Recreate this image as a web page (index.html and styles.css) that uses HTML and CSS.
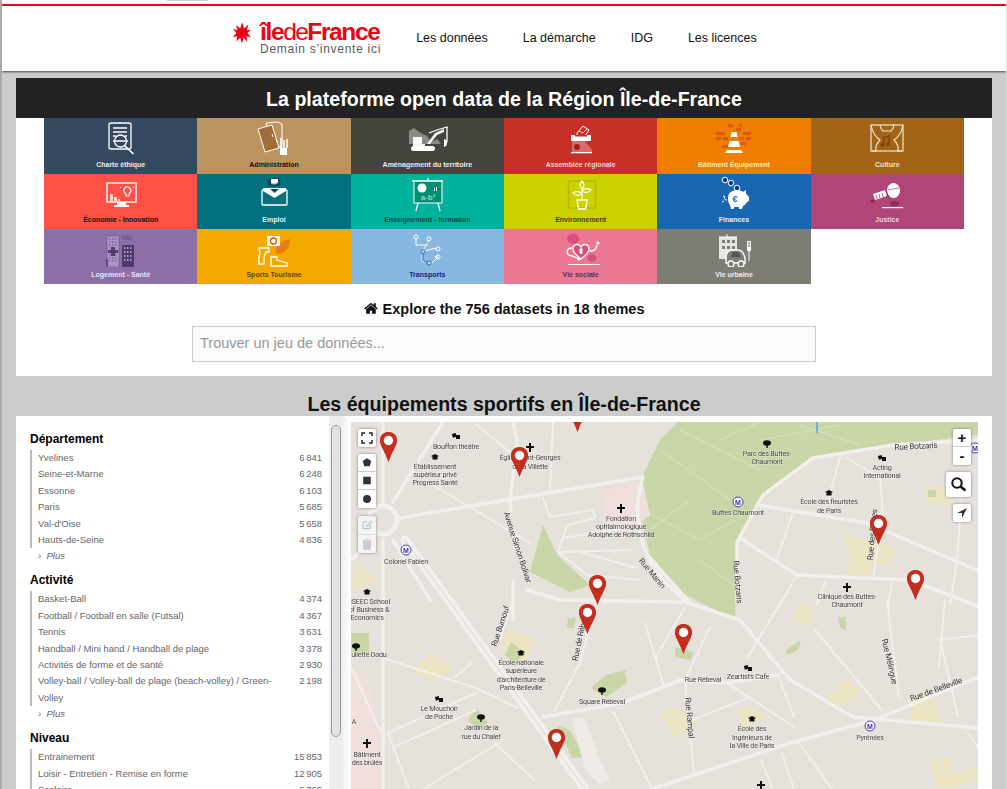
FILE: index.html
```html
<!DOCTYPE html>
<html lang="fr">
<head>
<meta charset="utf-8">
<title>Île-de-France open data</title>
<link rel="stylesheet" href="styles.css">
</head>
<body>
<div class="page">
<header class="header">
  <div class="topstrip"><span class="toptab"></span></div>
  <div class="redline"></div>
  <div class="navrow">
    <a class="logo">
      <svg class="star" viewBox="0 0 20 24"><polygon fill="#f00012" points="10,0 12.300,7 17,2.500 15.300,9 20,8.500 16,12 20,16.500 15,15.500 16,22 11.800,17 10,24 8,17 3.500,21.500 4.800,15.500 0,16.500 3.800,12 0,7.500 5,9 3.500,3 8,7"/></svg>
      <span class="logotext">
        <span class="logomain">île<span class="logode">de</span>France</span>
        <span class="logosub">Demain s’invente ici</span>
      </span>
    </a>
    <nav class="nav"><a>Les données</a><a>La démarche</a><a>IDG</a><a>Les licences</a></nav>
  </div>
</header>
<main class="main">
<section class="hero">
  <h1 class="band">La plateforme open data de la Région Île-de-France</h1>
  <div class="tiles">
    <div class="tile t1"><svg viewBox="0 0 56 36"><g fill="none" stroke="#fff" stroke-width="1.300"><rect x="16" y="3" width="22" height="26" rx="2"/><path d="M20 8h14M20 12h14M20 16h3M32 16h2"/><circle cx="27.500" cy="21" r="6" fill="#34495f"/><path d="M20 21h15M31.500 25.500l9 8.500" stroke-width="1.700"/></g></svg><span>Charte éthique</span></div>
    <div class="tile t2"><svg viewBox="0 0 56 36"><path d="M20 3l11-1 5 2v23H24z" fill="none" stroke="#fff" stroke-width="1"/><path d="M12 9l14-4 7 23-14 4z" fill="#a06d38" stroke="#fff" stroke-width="1"/><path d="M26 14l1 3M30 19l1 3" stroke="#fff"/><path d="M35 18v10M38 20v8M41 19v9" stroke="#fff" stroke-width="1.500"/><rect x="34" y="28" width="7" height="7" fill="#fff"/></svg><span class="dark0">Administration</span></div>
    <div class="tile t3"><svg viewBox="0 0 56 36"><path d="M10 24v-13l5-3 5 4 8 4 4 6 6-3 4 5z" fill="#8b8a84"/><path d="M14 17h9v7h5l8-11 9-4v3l-7 3-7 9h-5v2H14z" fill="#fff" opacity=".95"/><path d="M30 13l8-3 10-3v15" fill="none" stroke="#fff" stroke-width="1.300"/><path d="M45 19c4 1 4 7 0 8z" fill="#fff"/><rect x="12" y="26" width="24" height="5" rx="2.500" fill="#fff"/></svg><span>Aménagement du territoire</span></div>
    <div class="tile t4"><svg viewBox="0 0 56 36"><path d="M24 13l6-7 6 4-4 6h-8z" fill="#c82f26" stroke="#fff"/><path d="M26 11l4 2 4-4" fill="none" stroke="#fff" stroke-width=".8"/><rect x="18" y="15" width="20" height="6" fill="#fff"/><rect x="22" y="15" width="12" height="1.500" fill="#c82f26"/><path d="M19 21h13l7 9v2H19z" fill="#fff" opacity=".3"/><rect x="18" y="32" width="21" height="1.300" fill="#fff"/><circle cx="24" cy="27" r="3" fill="#a31c15"/></svg><span class="lt4">Assemblée régionale</span></div>
    <div class="tile t5"><svg viewBox="0 0 56 36"><g fill="#dc5a0b"><rect x="10" y="12" width="9" height="3"/><rect x="10" y="17" width="5" height="3"/><rect x="17" y="17" width="5" height="3"/><rect x="22" y="4" width="5" height="3"/><rect x="30" y="8" width="5" height="3"/><rect x="37" y="12" width="8" height="3"/><rect x="33" y="17" width="5" height="3"/><rect x="40" y="17" width="5" height="3"/><rect x="35" y="22" width="5" height="3"/><rect x="16" y="25" width="6" height="3"/><rect x="33" y="4" width="3" height="3"/></g><path d="M25.500 12h5l1 5h-7zM23.500 21h9l1.500 6h-12zM19 33l2-3h14l2 3z" fill="#fff"/></svg><span class="lt5">Bâtiment Équipement</span></div>
    <div class="tile t6"><svg viewBox="0 0 56 36"><g fill="none" stroke="#f4e6cf" stroke-width="1.200"><rect x="12" y="5" width="32" height="26" /><path d="M12 5c2 10 6 13 9 15-3 3-5 6-4 11h-4M44 5c-2 10-6 13-9 15 3 3 5 6 4 11h4M21 5c0 3 2 5 3 6h8c1-1 3-3 3-6"/></g><path d="M24 17l7-2v9a2 2 0 1 1-1.500-2v-5l-4 1v7a2 2 0 1 1-1.500-2z" fill="#7d470b"/></svg><span class="lt6">Culture</span></div>

    <div class="tile t7"><svg viewBox="0 0 56 36"><rect x="14" y="7" width="29" height="19" fill="#ff5145" stroke="#fff" stroke-width="1.400"/><path d="M24 26h9v3h3v2H21v-2h3z" fill="#fff"/><path d="M17 18h3v7h-3zM21 21h3v4h-3zM25 23h2v2h-2z" fill="#fff" opacity=".75"/><path d="M33 18c-5-4 0-8 2-7s5 3 1 7v2h-3z" fill="none" stroke="#fff" stroke-width="1.200"/><path d="M27 11l1 1M34 6v1M41 11l-1 1" stroke="#fff"/></svg><span class="dark0">Économie - Innovation</span></div>
    <div class="tile t8"><svg viewBox="0 0 56 36"><path d="M22 10V5c0-2 1-3 3-3h7c1 0 2 1 2 3v5z" fill="#0b4a5a"/><path d="M25 3h7v3l-1 2-1-1-1 2-1-2-1 2-1-2-1 1z" fill="#fff"/><path d="M17 14h23a1 1 0 0 1 1 1v13a1 1 0 0 1-1 1H17a1 1 0 0 1-1-1V15a1 1 0 0 1 1-1z" fill="none" stroke="#fff" stroke-width="1.300"/><path d="M17 12h23v3l-11.500 7L17 15z" fill="#fff"/><path d="M24 13h9l-4.500 4z" fill="#0b4a5a"/></svg><span class="lt8">Emploi</span></div>
    <div class="tile t9"><svg viewBox="0 0 56 36"><rect x="15" y="5" width="28" height="22" fill="#008f74"/><path d="M13 5h31M29 2v3M19 27l-2 8M39 27l2 8" stroke="#fff" stroke-width="1.300"/><path d="M15 5v22h28V5" fill="none" stroke="#fff" stroke-width="1"/><circle cx="23" cy="12" r="4.500" fill="#fff"/><path d="M35 12h1v3h-1zM37 11h1v4h-1z" fill="#fff"/><text x="29" y="23.500" class="boardtxt">a-b²</text></svg><span class="lt9">Enseignement - formation</span></div>
    <div class="tile t10"><svg viewBox="0 0 56 36"><rect x="15.500" y="5" width="27" height="27" fill="none" stroke="#b4b900" stroke-width="1.500"/><g fill="none" stroke="#fff" stroke-width="1.100"><path d="M29 24V12"/><path d="M29 5c-3 3-2 6 0 8 2-2 3-5 0-8zM29 18c-2-3-6-3-9-1 2 3 6 3 9 1zM29 15c2-3 6-3 9-1-2 3-6 3-9 1z"/></g><path d="M24 24h10l-1.500 9H25.500z" fill="none" stroke="#fff" stroke-width="1.300"/></svg><span class="lt10">Environnement</span></div>
    <div class="tile t11"><svg viewBox="0 0 56 36"><g fill="#0c3c86" stroke="#fff"><circle cx="19" cy="4" r="2.800"/><circle cx="25" cy="7" r="2.800"/><circle cx="31" cy="12" r="2.800"/></g><path d="M22 22c0-6 5-8 10-8 2 0 4 1 5 2l3-2v4c2 1 3 3 3 3v4l-2 1c-1 2-2 3-4 4l-1 3h-3v-2h-5v2h-3l-1-4c-1-1-2-3-2-7z" fill="#fff"/><text x="29" y="26" class="eurotxt">€</text><path d="M21 24c-3 0-3-2-2-4M18 25l-2 1M19 21l-2-1" stroke="#fff" fill="none"/></svg><span class="lt11">Finances</span></div>
    <div class="tile t12"><svg viewBox="0 0 56 36"><path d="M27 15l5-1 1 6-5 1z" fill="#7f2552"/><path d="M14 18l12-4 2 6-12 4z" fill="#fff"/><path d="M17 19l1 4M20 18l1 4M23 17l1 4" stroke="#b04577" stroke-width=".8"/><ellipse cx="34.500" cy="14.500" rx="6.500" ry="7.500" fill="#fff"/><path d="M29 14l11-2" stroke="#b04577" stroke-width=".7"/><ellipse cx="13.500" cy="25" rx="2" ry="1.500" fill="#7f2552"/><rect x="23" y="31" width="21" height="1.200" fill="#fff"/><ellipse cx="35.500" cy="27.500" rx="4.700" ry="2.500" fill="#8f2b5e"/></svg><span class="lt12">Justice</span></div>

    <div class="tile t13"><svg viewBox="0 0 56 36"><rect x="14" y="5" width="12" height="31" fill="#ab95c3" stroke="#5e4780" stroke-width=".5"/><path d="M16 8h8M16 11h8M16 14h8M16 24h8M16 27h8M16 30h8" stroke="#5e4780" stroke-dasharray="1.500 1.500"/><path d="M18 16h4v3h3v3h-3v3h-4v-3h-3v-3h3z" fill="#503c70"/><rect x="29" y="14" width="12" height="22" fill="#4f3870"/><path d="M31 17h8M31 21h8M31 25h8M31 29h8" stroke="#fff" stroke-dasharray="1.500 1.500"/><path d="M28 7c0-2 2-3 4-2 2-2 5-1 6 1 2 0 2 3 0 3H29z" fill="#7c5e9c"/><path d="M13 28h2v8h-2z" fill="#62498a"/></svg><span class="lt13">Logement - Santé</span></div>
    <div class="tile t14"><svg viewBox="0 0 56 36"><path d="M30 23c-2-7 5-14 14-15 1 8-5 15-14 15z" fill="#e87c10"/><rect x="21" y="5" width="13" height="10" rx="1" fill="#fff"/><circle cx="27.500" cy="10" r="3" fill="none" stroke="#d85a08" stroke-width="1.300"/><path d="M13 17h10v4h-3l-2 5v7h-5c-1-5 0-8 1-11z" fill="none" stroke="#fff" stroke-width="1.300"/><path d="M25 26h6v3l10 3v3H25z" fill="none" stroke="#fff" stroke-width="1.300"/></svg><span class="lt14">Sports Tourisme</span></div>
    <div class="tile t15"><svg viewBox="0 0 56 36"><g fill="none"><path d="M29 11v-2M17 8v6h10M29 12l-6 9v9l6 2h4l6-6h-3M38 17l-9 2-5 2" stroke="#fff" stroke-width="1"/><path d="M24 21v8l5 3" stroke="#5f86c9" stroke-width="1.500"/><circle cx="17" cy="6" r="2" stroke="#fff"/><circle cx="30" cy="8" r="2" stroke="#fff"/><circle cx="24" cy="21" r="2" stroke="#5f86c9" stroke-width="1.300"/><circle cx="39" cy="18" r="2" stroke="#fff"/><circle cx="39" cy="26" r="2" stroke="#fff"/><circle cx="30" cy="32" r="2" stroke="#5f86c9" stroke-width="1.300"/></g></svg><span class="lt15">Transports</span></div>
    <div class="tile t16"><svg viewBox="0 0 56 36"><ellipse cx="20" cy="8" rx="6" ry="5" fill="#d9517a"/><ellipse cx="39" cy="27" rx="4.500" ry="4" fill="#d9517a"/><path d="M28 28c-5-4-8-7-8-10 0-5 6-6 8-2 2-4 8-3 8 2 0 3-3 6-8 10z" fill="#d9517a" stroke="#fff" stroke-width="1.300"/><rect x="26.500" y="17" width="3" height="6" rx="1.500" fill="#fff"/><path d="M19 17c-6 0-7 7 0 8l7 3M37 20c4 0 6-1 7-6" fill="none" stroke="#fff" stroke-width="1.300"/><circle cx="45" cy="12" r="1.600" fill="#fff"/><circle cx="26" cy="28" r="1.600" fill="#fff"/><rect x="15" y="33" width="32" height="1" fill="#fff"/></svg><span class="lt16">Vie sociale</span></div>
    <div class="tile t17"><svg viewBox="0 0 56 36"><rect x="13" y="6" width="18" height="22" fill="#fff" opacity=".8"/><path d="M21 3v3M13 6h18" stroke="#fff"/><path d="M16 9h3v3h-3zM21 9h3v3h-3zM26 9h3v3h-3zM16 15h3v3h-3zM21 15h3v3h-3zM26 15h3v3h-3z" fill="#7d7d76"/><path d="M20 27c0-5 3-8 7-8h5c4 0 6 4 7 8v5H20z" fill="#7d7d76" stroke="#fff" stroke-width="1.400"/><path d="M25 26l2-5h5l3 5z" fill="#55544e"/><circle cx="25" cy="33" r="3" fill="#7d7d76" stroke="#fff" stroke-width="1.300"/><circle cx="35" cy="33" r="3" fill="#7d7d76" stroke="#fff" stroke-width="1.300"/><rect x="41" y="10" width="4" height="10" fill="#fff"/><path d="M43 20v10" stroke="#fff"/><circle cx="43" cy="12" r="1" fill="#7d7d76"/><circle cx="43" cy="15" r="1" fill="#7d7d76"/></svg><span class="lt17">Vie urbaine</span></div>
  </div>
  <h2 class="explore"><svg class="home" viewBox="0 0 1792 1792"><path d="M1408 992v480q0 26-19 45t-45 19h-384v-384h-256v384h-384q-26 0-45-19t-19-45v-480q0-1 .5-3t.5-3l575-474 575 474q1 2 1 6zm223-69l-62 74q-8 9-21 11h-3q-13 0-21-7l-692-577-692 577q-12 8-24 7-13-2-21-11l-62-74q-8-10-7-23.500t11-21.500l719-599q32-26 76-26t76 26l244 204v-195q0-14 9-23t23-9h192q14 0 23 9t9 23v408l219 182q10 8 11 21.500t-7 23.500z"/></svg> Explore the 756 datasets in 18 themes</h2>
  <div class="searchwrap"><input class="search" type="text" placeholder="Trouver un jeu de données..."></div>
</section>
<h2 class="sectitle">Les équipements sportifs en Île-de-France</h2>
<section class="panel">
  <aside class="facets">
    <h3>Département</h3>
    <ul>
      <li><span>Yvelines</span><b>6 841</b></li>
      <li><span>Seine-et-Marne</span><b>6 248</b></li>
      <li><span>Essonne</span><b>6 103</b></li>
      <li><span>Paris</span><b>5 685</b></li>
      <li><span>Val-d'Oise</span><b>5 658</b></li>
      <li><span>Hauts-de-Seine</span><b>4 836</b></li>
    </ul>
    <p class="more">› &nbsp;Plus</p>
    <h3>Activité</h3>
    <ul>
      <li><span>Basket-Ball</span><b>4 374</b></li>
      <li><span>Football / Football en salle (Futsal)</span><b>4 367</b></li>
      <li><span>Tennis</span><b>3 631</b></li>
      <li><span>Handball / Mini hand / Handball de plage</span><b>3 378</b></li>
      <li><span>Activités de forme et de santé</span><b>2 930</b></li>
      <li><span>Volley-ball / Volley-ball de plage (beach-volley) / Green-Volley</span><b>2 198</b></li>
    </ul>
    <p class="more">› &nbsp;Plus</p>
    <h3>Niveau</h3>
    <ul>
      <li><span>Entrainement</span><b>15 853</b></li>
      <li><span>Loisir - Entretien - Remise en forme</span><b>12 905</b></li>
      <li><span>Scolaire</span><b>6 765</b></li>
    </ul>
  </aside>
  <div class="scrollzone"><div class="thumb"></div></div>
  <div class="map">
    <svg class="mapsvg" viewBox="351 422 627 367" preserveAspectRatio="none">
      <defs>
        <g id="mortar"><path d="M-4-1l4-2 4 2-4 2z"/><path d="M-2.500 0v2.500h5V0z"/></g>
        <g id="tree"><ellipse cx="0" cy="-1" rx="4" ry="2.800"/><rect x="-.7" y="0" width="1.400" height="4"/></g>
        <g id="theatre"><rect x="-3.500" y="-3" width="4" height="4" transform="rotate(-15)"/><rect x="0" y="-1" width="4" height="4"/></g>
        <path id="cross" d="M-1-4h2v3h3v2h-3v4h-2v-4h-3v-2h3z"/>
        <g id="metro"><circle r="5" fill="#fff" stroke="#4a3fb0"/><text y="2.500" class="metrotxt">M</text></g>
      </defs>
      <rect x="351" y="422" width="627" height="367" fill="#e6e1db"/>
      <path d="M678 422L660 440L643 475L640 510L650 555L680 592L735 620L737 542L763 495L813 458L893 445L978 435V422Z" fill="#c9d6a7"/>
      <path d="M643 510L700 540L735 520M660 450L730 500M680 430L760 470M700 560L740 590M760 440L840 425M650 530L690 500M800 425L860 445M720 440L760 422" fill="none" stroke="#d9e3c0" stroke-width="1"/>
      <path d="M817 422v11" stroke="#6fb1d8" stroke-width="2"/>
      <g fill="#f1dfdd"><path d="M603 490L643 483L650 515L623 538L603 515Z"/><path d="M351 667L368 680L380 733V789H351Z"/></g>
      <g fill="#ece5c4">
        <path d="M843 535L897 548L887 565L872 562L870 578L847 578L850 552Z"/><path d="M925 487L953 488L950 507L927 503Z"/><path d="M430 652L453 668L434 682L415 672Z"/><path d="M505 630L537 640L526 660L501 650Z"/><path d="M799 603L813 607L809 627L792 620Z"/><path d="M824 703L845 677L861 693L840 707Z"/><path d="M912 700L933 690L941 722L910 722Z"/><path d="M660 713L677 707L698 723L673 738Z"/><path d="M736 710L752 707L769 717L744 727Z"/><path d="M931 760L950 758L954 773L978 767V780L945 789H937Z"/><path d="M355 562L380 582L352 590Z"/>
      </g>
      <g fill="#c9d6a7">
        <path d="M543 525L530 572L570 592L590 585L557 555Z"/><path d="M606 675L625 670L627 683L606 697L591 688Z"/><path d="M675 647L694 652L690 660L675 657Z"/><path d="M568 618L576 618L574 628L567 628Z"/><path d="M557 725L570 730L585 757L572 758Z"/><path d="M786 650L801 640L798 650L788 655Z"/><path d="M838 617H846V630L840 628Z"/><path d="M476 708L488 723L478 730L468 720Z"/><path d="M351 633H369V653H351Z"/><path d="M511 642L524 652L516 665L505 655Z"/><path d="M928 490H936V497H928Z"/>
      </g>
      <path d="M572 718L585 718L600 760L610 780L600 785L585 770Z" fill="#efece8"/>
      <g fill="none" stroke="#f2f0ec" stroke-linecap="round" stroke-linejoin="round" stroke-width="2">
        <path d="M477 425L510 452M553 422L550 492M433 485L530 543M543 498L550 517L593 510L595 518L567 525L558 552L587 575L640 580M563 538L627 528M560 552L630 550M580 552L637 568"/>
        <path d="M840 458L827 505M847 458L880 478L883 515L873 578M793 513L777 558M797 575L780 605M825 582L817 605M892 583L888 605M947 558L957 562L950 605M963 482L957 558"/>
        <path d="M383 658L476 688L518 708M388 733L476 693M394 747L476 710M423 789L499 743M495 743L534 780M388 733L409 789M351 667L381 733M472 663L455 677M500 640L513 600M656 657L685 607M645 623L664 687M710 627L685 680M614 713L652 789M782 600L748 657M692 720L748 698M727 683L794 727M778 675L794 717M815 630L882 710M887 600L899 697M941 643L958 717M945 600L939 667M939 640L978 635M799 743L832 789M761 760L773 789M782 753L794 789M968 733L978 747M685 680L694 773M580 663L555 710M597 600L580 663"/>
      </g>
      <g fill="none" stroke="#f2f0ec" stroke-linecap="round" stroke-linejoin="round" stroke-width="3.500">
        <path d="M383 422V505M393 502L443 422M400 518L643 477M513 422L517 442L510 502L511 510M513 582V620M430 600L393 540M527 590L560 600L685 602L740 620L790 680L853 717L978 728M650 558L690 603M543 717L622 703L681 680L727 683L778 675M978 677L874 720L790 743L652 789M383 540V789M351 560L375 535M757 505L867 523L977 570M740 538L797 575L910 580L978 606"/>
        <path d="M643 477C630 520 640 570 690 603M737 602L737 542L763 495L813 458L893 445L978 440"/>
        <path d="M405 540L585 789" stroke-width="9"/>
      </g>
      <path d="M405 540L585 789" fill="none" stroke="#dcd6cf" stroke-width="1"/>
      <circle cx="383" cy="520" r="14" fill="#e6e1db" stroke="#f2f0ec" stroke-width="5"/>
      <g class="maptxt">
        <text x="456" y="449">Bouffon théâtre</text>
        <text x="435" y="469">Établissement</text><text x="435" y="477">supérieur privé</text><text x="435" y="485">Progress Santé</text>
        <text x="530" y="460">Église Saint-Georges</text><text x="530" y="469">de la Villette</text>
        <text x="621" y="521">Fondation</text><text x="621" y="529">ophtalmologique</text><text x="621" y="537">Adolphe de Rothschild</text>
        <text x="406" y="564">Colonel Fabien</text>
        <text x="370" y="604">ISEEC School</text><text x="369" y="612">of Business &amp;</text><text x="367" y="620">Economics</text>
        <text x="367" y="657">Juliette Dodu</text><text x="354" y="724">A</text>
        <text x="367" y="757">Bâtiment</text><text x="367" y="765">des brûlés</text>
        <text x="767" y="456">Parc des Buttes-</text><text x="767" y="464">Chaumont</text>
        <text x="738" y="515">Buttes Chaumont</text>
        <text x="882" y="470">Acting</text><text x="882" y="478">International</text>
        <text x="829" y="504">École des fleuristes</text><text x="829" y="513">de Paris</text>
        <text x="847" y="599">Clinique des Buttes-</text><text x="847" y="607">Chaumont</text>
        <text x="521" y="665">École nationale</text><text x="521" y="673">supérieure</text><text x="521" y="682">d'architecture de</text><text x="521" y="690">Paris-Belleville</text>
        <text x="602" y="704">Square Rébeval</text>
        <text x="439" y="711">Le Mouchoir</text><text x="439" y="719">de Poche</text>
        <text x="481" y="730">Jardin de la</text><text x="481" y="739">rue du Chalet</text>
        <text x="703" y="682">Rue Rébeval</text>
        <text x="748" y="679">Zeartist's Cafe</text>
        <text x="752" y="731">École des</text><text x="752" y="740">Ingénieurs de</text><text x="752" y="748">la Ville de Paris</text>
        <text x="870" y="740">Pyrénées</text>
        <text class="road" transform="translate(515 548) rotate(72)">Avenue Simón Bolívar</text>
        <text class="road" transform="translate(650 575) rotate(50)">Rue Manin</text>
        <text class="road" transform="translate(916 449) rotate(-3)">Rue Botzaris</text>
        <text class="road" transform="translate(875 535) rotate(-85)">Rue des Buttes</text>
        <text class="road" transform="translate(735 582) rotate(85)">Rue Botzaris</text>
        <text class="road" transform="translate(503 627) rotate(-72)">Rue Burnouf</text>
        <text class="road" transform="translate(583 636) rotate(-78)">Rue de Rébeval</text>
        <text class="road" transform="translate(687 718) rotate(85)">Rue Rampal</text>
        <text class="road" transform="translate(887 662) rotate(77)">Rue Mélingue</text>
        <text class="road" transform="translate(937 692) rotate(-20)">Rue de Belleville</text>
      </g>
      <g fill="#111">
        <use href="#mortar" x="435" y="457"/><use href="#mortar" x="367" y="592"/><use href="#mortar" x="521" y="653"/><use href="#mortar" x="829" y="493"/><use href="#mortar" x="752" y="719"/>
        <use href="#tree" x="767" y="444"/><use href="#tree" x="356" y="647"/><use href="#tree" x="602" y="691"/><use href="#tree" x="481" y="718"/>
        <use href="#theatre" x="456" y="436"/><use href="#theatre" x="882" y="458"/><use href="#theatre" x="439" y="699"/><use href="#theatre" x="748" y="668"/>
        <use href="#cross" x="530" y="447"/><use href="#cross" x="621" y="508"/><use href="#cross" x="847" y="587"/><use href="#cross" x="367" y="743"/><use href="#cross" x="761" y="785"/>
      </g>
      <use href="#metro" x="406" y="550"/><use href="#metro" x="738" y="502"/><use href="#metro" x="870" y="726"/><use href="#metro" x="975" y="448"/>
    </svg>
    <svg class="pin p1" viewBox="0 0 17 30"><path d="M8.500 0C3.500 0 0 4 0 8.500 0 14 5.500 20 8.500 30 11.500 20 17 14 17 8.500 17 4 13.500 0 8.500 0z" fill="#c52d1c"/><circle cx="8.500" cy="8.500" r="4.700" fill="#fff"/></svg>
    <svg class="pin p2" viewBox="0 0 17 30"><path d="M8.500 0C3.500 0 0 4 0 8.500 0 14 5.500 20 8.500 30 11.500 20 17 14 17 8.500 17 4 13.500 0 8.500 0z" fill="#c52d1c"/><circle cx="8.500" cy="8.500" r="4.700" fill="#fff"/></svg>
    <svg class="pin p3" viewBox="0 0 17 30"><path d="M8.500 0C3.500 0 0 4 0 8.500 0 14 5.500 20 8.500 30 11.500 20 17 14 17 8.500 17 4 13.500 0 8.500 0z" fill="#c52d1c"/><circle cx="8.500" cy="8.500" r="4.700" fill="#fff"/></svg>
    <svg class="pin p4" viewBox="0 0 17 30"><path d="M8.500 0C3.500 0 0 4 0 8.500 0 14 5.500 20 8.500 30 11.500 20 17 14 17 8.500 17 4 13.500 0 8.500 0z" fill="#c52d1c"/><circle cx="8.500" cy="8.500" r="4.700" fill="#fff"/></svg>
    <svg class="pin p5" viewBox="0 0 17 30"><path d="M8.500 0C3.500 0 0 4 0 8.500 0 14 5.500 20 8.500 30 11.500 20 17 14 17 8.500 17 4 13.500 0 8.500 0z" fill="#c52d1c"/><circle cx="8.500" cy="8.500" r="4.700" fill="#fff"/></svg>
    <svg class="pin p6" viewBox="0 0 17 30"><path d="M8.500 0C3.500 0 0 4 0 8.500 0 14 5.500 20 8.500 30 11.500 20 17 14 17 8.500 17 4 13.500 0 8.500 0z" fill="#c52d1c"/><circle cx="8.500" cy="8.500" r="4.700" fill="#fff"/></svg>
    <svg class="pin p7" viewBox="0 0 17 30"><path d="M8.500 0C3.500 0 0 4 0 8.500 0 14 5.500 20 8.500 30 11.500 20 17 14 17 8.500 17 4 13.500 0 8.500 0z" fill="#c52d1c"/><circle cx="8.500" cy="8.500" r="4.700" fill="#fff"/></svg>
    <svg class="pin p8" viewBox="0 0 17 30"><path d="M8.500 0C3.500 0 0 4 0 8.500 0 14 5.500 20 8.500 30 11.500 20 17 14 17 8.500 17 4 13.500 0 8.500 0z" fill="#c52d1c"/><circle cx="8.500" cy="8.500" r="4.700" fill="#fff"/></svg>
    <svg class="pin p9" viewBox="0 0 17 30"><path d="M8.500 0C3.500 0 0 4 0 8.500 0 14 5.500 20 8.500 30 11.500 20 17 14 17 8.500 17 4 13.500 0 8.500 0z" fill="#c52d1c"/><circle cx="8.500" cy="8.500" r="4.700" fill="#fff"/></svg>

    <div class="ctl fs"><svg viewBox="0 0 18 18"><path d="M4 7V4h3M11 4h3v3M14 11v3h-3M7 14H4v-3" fill="none" stroke="#222" stroke-width="1.500"/></svg></div>
    <div class="ctl draw">
      <div><svg viewBox="0 0 18 18"><polygon points="9,4.500 13.500,7.500 12,13 6,13 4.500,7.500" fill="#333"/></svg></div>
      <div><svg viewBox="0 0 18 18"><rect x="5" y="5" width="8" height="8" fill="#333"/></svg></div>
      <div><svg viewBox="0 0 18 18"><circle cx="9" cy="9" r="4" fill="#333"/></svg></div>
    </div>
    <div class="ctl edit">
      <div><svg viewBox="0 0 18 18"><path d="M12 9v4H5V6h4M8 10l5-5 1 1-5 5z" fill="none" stroke="#bbb"/></svg></div>
      <div><svg viewBox="0 0 18 18"><path d="M5.500 6h7v8h-7zM5 5h8M8 4h2" fill="#ccc" stroke="#ccc"/></svg></div>
    </div>
    <div class="ctl zoomc"><div class="zbtn plus">+</div><div class="zbtn">-</div></div>
    <div class="ctl find"><svg viewBox="0 0 25 25"><circle cx="11" cy="11" r="4.700" fill="none" stroke="#111" stroke-width="2"/><path d="M14.500 14.500l5 4" stroke="#111" stroke-width="2.500"/></svg></div>
    <div class="ctl loc"><svg viewBox="0 0 18 18"><path d="M14 4L4 9h5v5z" fill="#333"/></svg></div>
  </div>
</section>
</main>
</div>
</body>
</html>
```
FILE: styles.css
```css
* { box-sizing: border-box; }
html, body { margin: 0; padding: 0; height: 789px; overflow: hidden; }
body { font-family: "Liberation Sans", Arial, sans-serif; background: #ccc; }
.page { height: 789px; overflow: hidden; border-left: 2px solid #aaa; border-right: 1px solid #ddd; background: #ccc; }

.header { height: 71px; background: #fff; box-shadow: 0 1px 2px rgba(0,0,0,.65); position: relative; }
.topstrip { height: 4px; padding-left: 165px; }
.toptab { display: block; width: 41px; height: 1px; background: #ccc; }
.redline { height: 2px; background: #f00012; }
.navrow { display: flex; align-items: center; height: 63px; padding: 0 0 0 231px; }
.logo { display: flex; align-items: flex-start; gap: 9px; height: 36px; margin-top: -1px; margin-right: 35px; }
.star { width: 18px; height: 24px; margin-top: 2px; }
.logotext { display: flex; flex-direction: column; }
.logomain { font-size: 24.500px; font-weight: 700; letter-spacing: -1.350px; color: #f00012; line-height: 25px; }
.logode { font-weight: 400; letter-spacing: -1.600px; }
.logosub { font-size: 12px; letter-spacing: .72px; color: #5a5a5a; line-height: 13px; white-space: nowrap; margin-top: -1px; }
.nav { display: flex; gap: 35px; font-size: 12.500px; color: #111; }

.main { padding: 7px 14px 0 14px; }
.hero { background: #fff; height: 298px; }
.band { margin: 0; height: 40px; background: #222; color: #fff; font-size: 19.600px; font-weight: 700; line-height: 42px; text-align: center; }
.tiles { display: grid; grid-template-columns: repeat(6, 153.33px); grid-template-rows: 56px 55px 55px; margin: 0 28px; }
.tile { display: flex; flex-direction: column; align-items: center; color: #e8eef5; font-size: 7px; font-weight: 700; overflow: hidden; }
.tile svg { width: 56px; height: 36px; margin-top: 2px; flex: none; }
.tile span { margin-top: 4px; line-height: 9px; white-space: nowrap; }
.tile:nth-child(n+7) span { margin-top: 3px; }
.t1 { background: #34495f; } .t2 { background: #bc9460; } .t3 { background: #45443c; }
.t4 { background: #c82f26; } .t5 { background: #ef7d00; } .t6 { background: #a26518; }
.t7 { background: #ff5145; } .t8 { background: #01707f; } .t9 { background: #00b29c; }
.t10 { background: #ccd100; } .t11 { background: #1a67b1; } .t12 { background: #b04577; }
.t13 { background: #8d6fa8; } .t14 { background: #f5a800; } .t15 { background: #86b8e2; }
.t16 { background: #ec7792; } .t17 { background: #7d7d76; }
.dark0 { color: #111; }
.lt4 { color: #f8cfcf; } .lt5 { color: #fbe7c8; } .lt6 { color: #f2e2c8; } .lt8 { color: #e0f4f8; }
.lt9 { color: #064f46; } .lt10 { color: #45450c; } .lt11 { color: #e6eefa; } .lt12 { color: #f7d2e3; }
.lt13 { color: #ece3f6; } .lt14 { color: #5a4a10; } .lt15 { color: #1a237e; } .lt16 { color: #5c3046; } .lt17 { color: #eee; }
.boardtxt { font: 700 8px "Liberation Sans", sans-serif; fill: #8fd6bf; text-anchor: middle; letter-spacing: 0; }
.eurotxt { font: 700 9px "Liberation Sans", sans-serif; fill: #1a67b1; text-anchor: middle; }

.explore { margin: 16px 0 0; height: 18px; font-size: 14.500px; line-height: 18px; font-weight: 700; color: #111; text-align: center; }
.home { width: 15px; height: 15px; vertical-align: -2px; fill: #111; }
.searchwrap { padding: 8px 176px 0; }
.search { display: block; width: 100%; height: 36px; border: 1px solid #ccc; background: #fbfbfb; padding: 0 7px 2px; font: 14.500px "Liberation Sans", sans-serif; color: #333; }
.search::placeholder { color: #999; opacity: 1; }

.sectitle { margin: 0; height: 40px; padding-top: 15px; font-size: 19.600px; line-height: 27px; font-weight: 700; color: #111; text-align: center; }
.panel { display: flex; background: #fff; height: 380px; padding-right: 14px; }
.facets { width: 313px; padding: 15px 7px 0 14px; overflow: hidden; flex: none; height: 373px; }
.facets h3 { margin: 0; font-size: 12px; line-height: 16px; font-weight: 700; color: #000; }
.facets ul { list-style: none; margin: 3px 0 0; padding: 0 0 0 6px; border-left: 2px solid #bbb; }
.facets li { display: flex; justify-content: space-between; gap: 18px; font-size: 9.500px; line-height: 16.400px; color: #666; }
.facets b { font-weight: 400; flex: none; word-spacing: -1px; }
.more { margin: 0 0 8px 8px; font-size: 9.500px; line-height: 16px; font-style: italic; color: #666; }
.scrollzone { width: 22px; flex: none; background: linear-gradient(90deg, #eee 0, #eee 55%, #fff 100%); padding: 9px 0 0 2px; }
.thumb { width: 10px; height: 312px; border: 1px solid #999; border-radius: 5px; background: #e2e2e2; }

.map { position: relative; width: 627px; height: 367px; margin-top: 6px; overflow: hidden; flex: none; }
.mapsvg { display: block; width: 627px; height: 367px; filter: blur(.35px); }
.maptxt text { font: 7.200px Roboto, "Liberation Sans", sans-serif; letter-spacing: -.25px; fill: #444; text-anchor: middle; paint-order: stroke; stroke: rgba(255,255,255,.5); stroke-width: 1px; }
.maptxt text.road { font-size: 8.200px; fill: #333; }
.metrotxt { font: 700 7px "Liberation Sans", sans-serif; fill: #3a2fa0; text-anchor: middle; }

.pin { position: absolute; width: 17px; height: 30px; filter: drop-shadow(0 0 .5px rgba(120,20,10,.6)); }
.p1 { left: 29px; top: 10px; }
.p2 { left: 160px; top: 25px; }
.p3 { left: 218px; top: -20px; }
.p4 { left: 238px; top: 153px; }
.p5 { left: 228px; top: 182px; }
.p6 { left: 324px; top: 202px; }
.p7 { left: 197px; top: 307px; }
.p8 { left: 519px; top: 93px; }
.p9 { left: 556px; top: 148px; }

.ctl { position: absolute; background: #fff; border-radius: 2px; box-shadow: 0 0 3px rgba(0,0,0,.45); width: 18px; }
.ctl svg { display: block; width: 100%; height: 100%; }
.fs { left: 7px; top: 7px; height: 18px; }
.draw { left: 7px; top: 32px; }
.draw div { height: 18px; border-bottom: 1px solid #ccc; }
.draw div:last-child { border-bottom: 0; }
.edit { left: 7px; top: 94px; background: #f4f4f4; }
.edit div { height: 18.500px; border-bottom: 1px solid #ddd; }
.edit div:last-child { border-bottom: 0; }
.zoomc { left: 602px; top: 7px; }
.zbtn { height: 18px; font-size: 15px; font-weight: 700; line-height: 17px; text-align: center; color: #111; border-bottom: 1px solid #ccc; }
.zbtn:last-child { border-bottom: 0; }
.plus { color: #111; }
.find { left: 595px; top: 50px; width: 25px; height: 25px; }
.loc { left: 602px; top: 82px; height: 18px; }
```
